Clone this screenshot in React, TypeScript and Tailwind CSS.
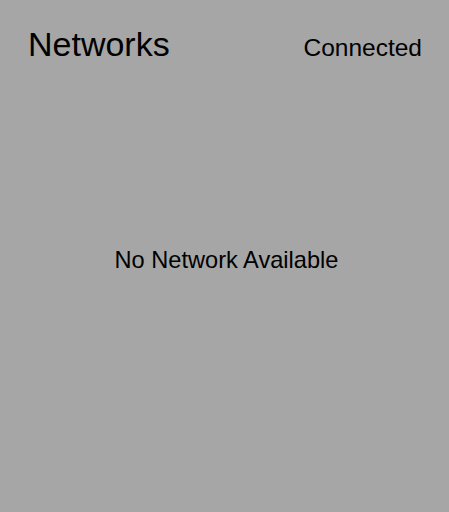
export default function App() {
  return (
    <div className="flex h-[512px] w-[449px] flex-col bg-[#a6a6a6] font-['Liberation_Sans',Arial,sans-serif] text-black">
      <header className="flex items-end justify-between pl-7 pr-[27px] pt-[24px]">
        <h1 className="text-[34px] leading-[40px]">Networks</h1>
        <span className="text-[24.5px] leading-[32px]">Connected</span>
      </header>
      <div className="flex flex-1 items-center justify-center pb-[54px] pl-[4px]">
        <p className="text-[23.6px]">No Network Available</p>
      </div>
    </div>
  );
}
